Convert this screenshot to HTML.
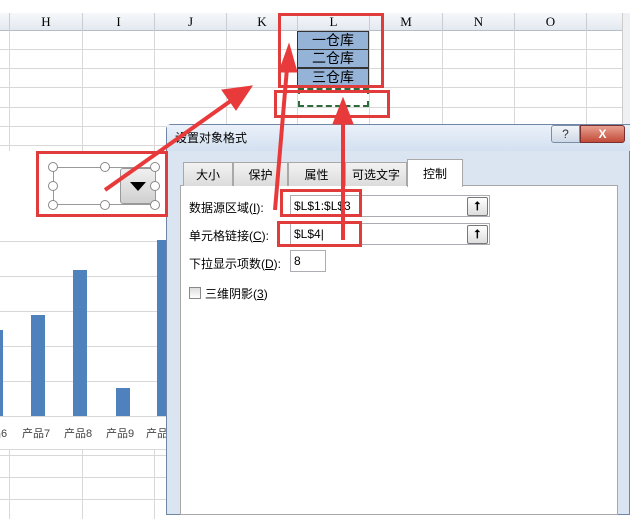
<!DOCTYPE html><html><head><meta charset="utf-8"><style>
*{margin:0;padding:0;box-sizing:border-box}
body{width:630px;height:515px;overflow:hidden;background:#fff;position:relative;font-family:"Liberation Sans","Noto Sans CJK SC",sans-serif;font-size:12px;color:#000}
.a{position:absolute}
.hdr{top:13px;height:18px;background:linear-gradient(#f6f8fb,#e4e9f0);border-bottom:1px solid #b5bdc8;left:0;width:622px}
.col{top:13px;height:18px;border-left:1px solid #c8cdd4;font-family:"Liberation Serif",serif;font-size:13px;text-align:center;line-height:18px}
.vl{width:1px;background:#d8d8d8}
.hl{height:1px;background:#d8d8d8}
.red{border:3px solid #e03c3c}
.cell{left:297px;width:72px;height:19px;background:#95b3d7;border:1px solid #333;text-align:center;font-size:14px;line-height:17px}
.h{width:10px;height:10px;border:1.5px solid #888;border-radius:50%;background:#fff}
.tab{top:162px;height:24px;background:linear-gradient(#f2f2f2,#dcdcdc);border:1px solid #a8a8a8;border-bottom:none;text-align:center;line-height:24px;font-size:12px}
.inp{height:22px;border:1px solid #abadb3;background:#fff;padding-left:3px;line-height:20px;font-size:12px}
.btn{width:21px;height:19px;border:1px solid #777;border-radius:2px;background:linear-gradient(#fff,#ddd);text-align:center;font-size:12px;line-height:17px;font-weight:bold}
</style></head><body>
<div class="a hdr"></div>
<div class="a col" style="left:9px;width:73px">H</div>
<div class="a col" style="left:82px;width:72px">I</div>
<div class="a col" style="left:154px;width:72px">J</div>
<div class="a col" style="left:226px;width:71px">K</div>
<div class="a col" style="left:297px;width:72px">L</div>
<div class="a col" style="left:369px;width:73px">M</div>
<div class="a col" style="left:442px;width:72px">N</div>
<div class="a col" style="left:514px;width:72px">O</div>
<div class="a col" style="left:586px;width:36px"></div>
<div class="a" style="left:622px;top:13px;width:8px;height:502px;background:#eef0f3;border-left:1px solid #ccc"></div>
<div class="a vl" style="left:9px;top:31px;height:120px"></div>
<div class="a vl" style="left:82px;top:31px;height:120px"></div>
<div class="a vl" style="left:154px;top:31px;height:120px"></div>
<div class="a vl" style="left:226px;top:31px;height:93px"></div>
<div class="a vl" style="left:297px;top:31px;height:93px"></div>
<div class="a vl" style="left:369px;top:31px;height:93px"></div>
<div class="a vl" style="left:442px;top:31px;height:93px"></div>
<div class="a vl" style="left:514px;top:31px;height:93px"></div>
<div class="a vl" style="left:586px;top:31px;height:93px"></div>
<div class="a hl" style="left:0;top:49px;width:622px"></div>
<div class="a hl" style="left:0;top:68px;width:622px"></div>
<div class="a hl" style="left:0;top:87px;width:622px"></div>
<div class="a hl" style="left:0;top:107px;width:622px"></div>
<div class="a hl" style="left:0;top:126px;width:166px"></div>
<div class="a hl" style="left:0;top:145px;width:166px"></div>
<div class="a cell" style="top:31px">一仓库</div>
<div class="a cell" style="top:49px">二仓库</div>
<div class="a cell" style="top:68px">三仓库</div>
<div class="a" style="left:298px;top:88px;width:71px;height:19px;border:2px dashed #2f6b3a"></div>
<!-- chart -->
<div class="a hl" style="left:0;top:241px;width:166px"></div>
<div class="a hl" style="left:0;top:276px;width:166px"></div>
<div class="a hl" style="left:0;top:311px;width:166px"></div>
<div class="a hl" style="left:0;top:346px;width:166px"></div>
<div class="a hl" style="left:0;top:381px;width:166px"></div>
<div class="a hl" style="left:0;top:416px;width:166px"></div>
<div class="a" style="left:0;top:330px;width:3px;height:86px;background:#4f81bd"></div>
<div class="a" style="left:31px;top:315px;width:14px;height:101px;background:#4f81bd"></div>
<div class="a" style="left:73px;top:270px;width:14px;height:146px;background:#4f81bd"></div>
<div class="a" style="left:116px;top:388px;width:14px;height:28px;background:#4f81bd"></div>
<div class="a" style="left:157px;top:240px;width:9px;height:176px;background:#4f81bd"></div>
<div class="a" style="left:0;top:425px;width:166px;font-size:11px;color:#444;white-space:nowrap;overflow:hidden;height:16px">
<span class="a" style="left:-10px">品6</span><span class="a" style="left:22px">产品7</span><span class="a" style="left:64px">产品8</span><span class="a" style="left:106px">产品9</span><span class="a" style="left:146px">产品</span></div>
<div class="a hl" style="left:0;top:449px;width:166px"></div>
<div class="a hl" style="left:0;top:455px;width:166px"></div>
<div class="a hl" style="left:0;top:477px;width:166px"></div>
<div class="a hl" style="left:0;top:499px;width:166px"></div>
<div class="a vl" style="left:9px;top:449px;height:70px"></div>
<div class="a vl" style="left:82px;top:449px;height:70px"></div>
<div class="a vl" style="left:154px;top:449px;height:70px"></div>
<!-- control -->
<div class="a" style="left:53px;top:167px;width:102px;height:38px;border:1px solid #999"></div>
<div class="a" style="left:120px;top:168px;width:36px;height:36px;background:linear-gradient(#f0f0f0,#d0d0d0);border:1px solid #999;border-radius:3px"></div>
<div class="a" style="left:130px;top:182px;width:0;height:0;border-left:8px solid transparent;border-right:8px solid transparent;border-top:9px solid #000"></div>
<div class="a h" style="left:48px;top:162px"></div><div class="a h" style="left:100px;top:162px"></div><div class="a h" style="left:150px;top:162px"></div>
<div class="a h" style="left:48px;top:181px"></div><div class="a h" style="left:150px;top:181px"></div>
<div class="a h" style="left:48px;top:200px"></div><div class="a h" style="left:100px;top:200px"></div><div class="a h" style="left:150px;top:200px"></div>
<!-- dialog -->
<div class="a" style="left:166px;top:124px;width:464px;height:391px;background:#dbe5f1;border:1px solid #6f86a6;border-radius:5px 0 0 0"></div>
<div class="a" style="left:167px;top:125px;width:463px;height:26px;background:linear-gradient(#eaf1fa,#d3e0f0)"></div>
<div class="a" style="left:175px;top:129px;font-size:12px">设置对象格式</div>
<div class="a" style="left:551px;top:125px;width:29px;height:18px;border:1px solid #7b8ea8;border-radius:3px 0 0 3px;background:linear-gradient(#f2f5f9,#cfd9e6);text-align:center;font-size:12px;line-height:16px;color:#333">?</div>
<div class="a" style="left:580px;top:125px;width:45px;height:18px;border:1px solid #7a3030;border-radius:0 3px 3px 0;background:linear-gradient(#e8a090,#c24a38);text-align:center;color:#fff;font-weight:bold;line-height:16px">X</div>
<div class="a" style="left:180px;top:185px;width:438px;height:330px;background:#fff;border:1px solid #a8a8a8"></div>
<div class="a tab" style="left:183px;width:50px">大小</div>
<div class="a tab" style="left:233px;width:55px">保护</div>
<div class="a tab" style="left:288px;width:57px">属性</div>
<div class="a tab" style="left:345px;width:62px">可选文字</div>
<div class="a tab" style="left:407px;top:159px;height:28px;width:56px;background:#fff;line-height:28px">控制</div>
<div class="a" style="left:189px;top:199px">数据源区域(<u>I</u>):</div>
<div class="a inp" style="left:290px;top:195px;width:200px">$L$1:$L$3</div>
<div class="a btn" style="left:467px;top:197px">⭡</div>
<div class="a" style="left:189px;top:227px">单元格链接(<u>C</u>):</div>
<div class="a inp" style="left:290px;top:223px;width:200px">$L$4|</div>
<div class="a btn" style="left:467px;top:225px">⭡</div>
<div class="a" style="left:189px;top:255px">下拉显示项数(<u>D</u>):</div>
<div class="a inp" style="left:290px;top:250px;width:36px">8</div>
<div class="a" style="left:189px;top:287px;width:12px;height:12px;border:1px solid #888;background:linear-gradient(#ddd,#fff)"></div>
<div class="a" style="left:205px;top:285px">三维阴影(<u>3</u>)</div>
<!-- red boxes -->
<div class="a red" style="left:278px;top:13px;width:106px;height:75px"></div>
<div class="a red" style="left:274px;top:90px;width:116px;height:28px"></div>
<div class="a red" style="left:36px;top:151px;width:132px;height:66px"></div>
<div class="a red" style="left:280px;top:189px;width:82px;height:28px"></div>
<div class="a red" style="left:277px;top:221px;width:85px;height:26px"></div>
<!-- arrows -->
<svg class="a" style="left:0;top:0" width="630" height="515">
<g stroke="#e83a3a" stroke-width="4" fill="#e83a3a">
<line x1="105" y1="190" x2="232" y2="100"/>
<polygon points="252,86 222,90 236,110" stroke-width="1"/>
<line x1="275" y1="210" x2="287" y2="68"/>
<polygon points="289,44 279,72 297,72" stroke-width="1"/>
<line x1="343" y1="240" x2="343" y2="120"/>
<polygon points="343,98 333,124 353,124" stroke-width="1"/>
</g></svg>
</body></html>
